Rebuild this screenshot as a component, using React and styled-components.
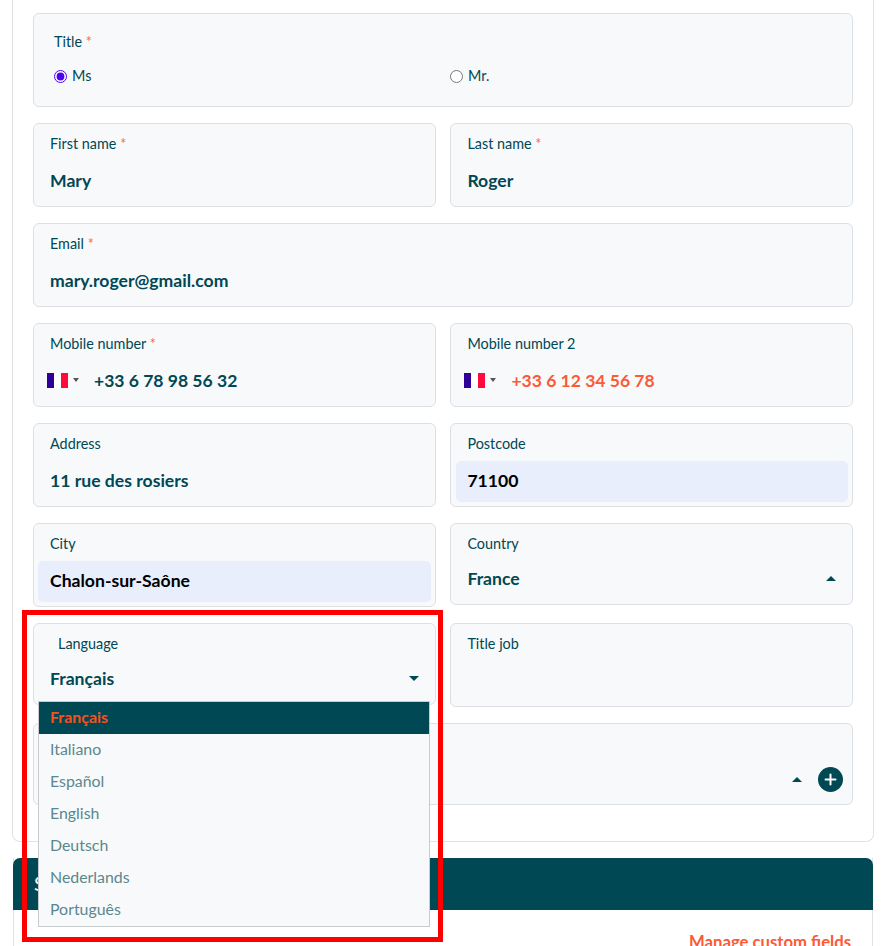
import React from "react";
import styled, { createGlobalStyle } from "styled-components";

const teal = "#004853";
const orange = "#fb5a35";

const Global = createGlobalStyle`
  html, body { margin: 0; padding: 0; height: 946px; overflow: hidden; background: #fff; }
  body { font-family: Lato, "Liberation Sans", sans-serif; color: ${teal}; }
  * { box-sizing: border-box; }
`;

const Page = styled.div`
  position: relative;
  width: 881px;
  height: 946px;
  padding: 0 7px 0 12px;
  overflow: hidden;
`;

const Panel = styled.section`
  border: 1px solid #dfe2e6;
  border-top: none;
  border-radius: 0 0 8px 8px;
  padding: 13px 20px 36px 20px;
`;

const Grid = styled.div`
  display: grid;
  grid-template-columns: 403px 402.6px;
  column-gap: 14.4px;
  row-gap: 16px;
  align-items: start;
`;

const Field = styled.div`
  position: relative;
  grid-column: ${(p) => (p.$wide ? "1 / -1" : "auto")};
  height: ${(p) => p.$h || 84}px;
  background: #f8f9fb;
  border: 1px solid #dce0e5;
  border-radius: 6px;
`;

const Label = styled.label`
  display: block;
  padding: ${(p) => p.$top || 11}px 0 0 ${(p) => p.$indent || 16}px;
  font-size: 14.4px;
  line-height: 18px;
  color: ${teal};
`;

const Star = styled.span`
  color: #fb6a4a;
`;

const Value = styled.div`
  display: flex;
  align-items: center;
  height: 41px;
  margin: 8px 4px 0 ${(p) => p.$inset || 4}px;
  padding: 0 0 2px ${(p) => 16 - (p.$inset || 4)}px;
  border-radius: 5px;
  font-size: 17.6px;
  font-weight: 700;
  background: ${(p) => (p.$autofill ? "#e8eefc" : "transparent")};
  color: ${(p) => (p.$autofill ? "#000" : teal)};
`;

const SelectRow = styled.div`
  display: flex;
  align-items: center;
  justify-content: space-between;
  height: 24px;
  margin-top: 13px;
  padding: 0 16px 0 16px;
  font-size: 17.6px;
  font-weight: 700;
  color: ${teal};
`;

const Arrow = styled.span`
  display: block;
  width: 0;
  height: 0;
  border-left: 5px solid transparent;
  border-right: 5px solid transparent;
  ${(p) => (p.$up ? `border-bottom: 5px solid ${teal};` : `border-top: 5px solid ${teal};`)}
`;

const PhoneRow = styled.div`
  display: flex;
  align-items: center;
  height: 24px;
  margin-top: 15px;
  padding-left: 12.6px;
  font-size: 17.55px;
  font-weight: 700;
  color: ${(p) => (p.$alert ? orange : teal)};
`;

const FlagBox = styled.span`
  display: flex;
  align-items: center;
  width: 47.4px;
  flex: none;
`;

const SmallCaret = styled.span`
  display: block;
  width: 0;
  height: 0;
  margin-left: 5px;
  border-left: 3px solid transparent;
  border-right: 3px solid transparent;
  border-top: 4px solid #555;
`;

const RadioRow = styled.div`
  display: grid;
  grid-template-columns: 396px 1fr;
  padding: 16px 0 0 20px;
`;

const RadioLabel = styled.label`
  display: flex;
  align-items: center;
  gap: 5px;
  font-size: 14.4px;
  line-height: 18px;
  color: ${teal};
`;

const Radio = styled.input`
  width: 13px;
  height: 13px;
  margin: 0;
  accent-color: #4f00f5;
`;

const LastRow = styled.div`
  display: flex;
  justify-content: flex-end;
  align-items: center;
  gap: 16px;
  padding: 43px 9px 0 0;
`;

const PlusButton = styled.button`
  display: flex;
  align-items: center;
  justify-content: center;
  width: 25px;
  height: 25px;
  padding: 0;
  border: none;
  border-radius: 50%;
  background: ${teal};
`;

const Section = styled.section`
  margin-top: 16px;
  margin-left: 1px;
  margin-right: 1px;
  height: 200px;
  border-left: 1px solid #dfe2e6;
  border-right: 1px solid #dfe2e6;
`;

const SectionHead = styled.h2`
  height: 52px;
  margin: 0 -1px;
  padding: 12px 0 0 21px;
  background: ${teal};
  border-radius: 7px 7px 0 0;
  color: #fff;
  font-size: 20px;
  line-height: 26px;
  font-weight: 400;
`;

const SectionBody = styled.div`
  display: flex;
  justify-content: flex-end;
  padding: 22px 21px 0 0;
`;

const ManageLink = styled.a`
  color: ${orange};
  font-size: 16.7px;
  line-height: 20px;
  font-weight: 700;
`;

const Menu = styled.ul`
  position: absolute;
  left: 4px;
  top: 77px;
  width: 392px;
  margin: 0;
  padding: 0;
  list-style: none;
  background: #f8f9fb;
  border: 1px solid #c9cccf;
  z-index: 2;
`;

const Option = styled.li`
  display: flex;
  align-items: center;
  height: 32px;
  padding: 0 0 4px 11px;
  font-size: 15.9px;
  font-weight: ${(p) => (p.$active ? 700 : 400)};
  background: ${(p) => (p.$active ? teal : "transparent")};
  color: ${(p) => (p.$active ? "#f4511e" : "#5b878e")};
`;

const Callout = styled.div`
  position: absolute;
  left: 22px;
  top: 610px;
  width: 421px;
  height: 332px;
  border: 5px solid #fe0000;
  pointer-events: none;
  z-index: 3;
`;

const Flag = () => (
  <svg width="21" height="15" viewBox="0 0 21 15">
    <rect width="7" height="15" fill="#2f0098" />
    <rect x="7" width="7" height="15" fill="#fff" />
    <rect x="14" width="7" height="15" fill="#ff0a3c" />
  </svg>
);

const Req = () => <Star> *</Star>;

const languages = ["Français", "Italiano", "Español", "English", "Deutsch", "Nederlands", "Português"];

export default function App() {
  return (
    <Page>
      <Global />
      <Panel>
        <Grid>
          <Field $wide $h={94}>
            <Label $indent={20} $top={19}>Title<Req /></Label>
            <RadioRow>
              <RadioLabel><Radio type="radio" name="t" defaultChecked />Ms</RadioLabel>
              <RadioLabel><Radio type="radio" name="t" />Mr.</RadioLabel>
            </RadioRow>
          </Field>
          <Field><Label>First name<Req /></Label><Value>Mary</Value></Field>
          <Field><Label>Last name<Req /></Label><Value>Roger</Value></Field>
          <Field $wide><Label>Email<Req /></Label><Value>mary.roger@gmail.com</Value></Field>
          <Field>
            <Label>Mobile number<Req /></Label>
            <PhoneRow>
              <FlagBox><Flag /><SmallCaret /></FlagBox>+33 6 78 98 56 32
            </PhoneRow>
          </Field>
          <Field>
            <Label>Mobile number 2</Label>
            <PhoneRow $alert>
              <FlagBox><Flag /><SmallCaret /></FlagBox>+33 6 12 34 56 78
            </PhoneRow>
          </Field>
          <Field><Label>Address</Label><Value>11 rue des rosiers</Value></Field>
          <Field><Label>Postcode</Label><Value $autofill $inset={5}>71100</Value></Field>
          <Field><Label>City</Label><Value $autofill>Chalon-sur-Saône</Value></Field>
          <Field $h={82}>
            <Label>Country</Label>
            <SelectRow>France<Arrow $up /></SelectRow>
          </Field>
          <Field $h={82}>
            <Label $indent={24}>Language</Label>
            <SelectRow>Français<Arrow /></SelectRow>
            <Menu>
              {languages.map((l, i) => (
                <Option key={l} $active={i === 0}>{l}</Option>
              ))}
            </Menu>
          </Field>
          <Field><Label>Title job</Label></Field>
          <Field $wide $h={82}>
            <LastRow>
              <Arrow $up />
              <PlusButton aria-label="Add">
                <svg width="13" height="13" viewBox="0 0 13 13">
                  <path d="M6.5 1.5v10M1.5 6.5h10" stroke="#fff" strokeWidth="2" strokeLinecap="round" />
                </svg>
              </PlusButton>
            </LastRow>
          </Field>
        </Grid>
      </Panel>
      <Section>
        <SectionHead>S</SectionHead>
        <SectionBody><ManageLink>Manage custom fields</ManageLink></SectionBody>
      </Section>
      <Callout />
    </Page>
  );
}
